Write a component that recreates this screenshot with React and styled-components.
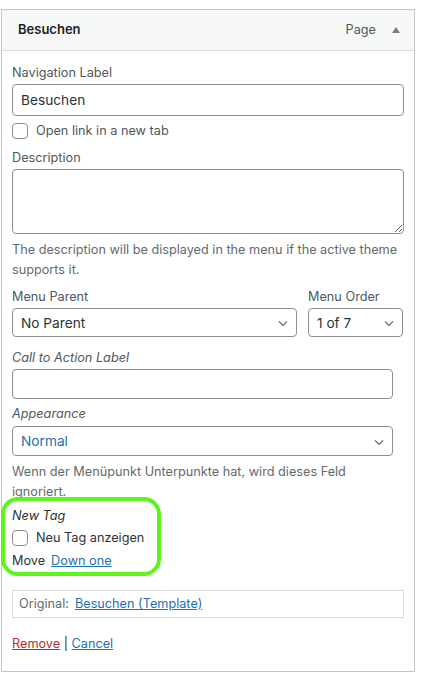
import React from 'react';
import styled, { createGlobalStyle } from 'styled-components';

const GlobalStyle = createGlobalStyle`
    html, body {
        margin: 0;
        padding: 0;
        background: #fff;
    }
    body {
        font-family: Inter, "Liberation Sans", Arial, sans-serif;
        font-size: 12.7px;
        line-height: 1.5;
        color: #2c3338;
    }
    *, *::before, *::after {
        box-sizing: border-box;
    }
`;

const chevron = encodeURIComponent(
    '<svg xmlns="http://www.w3.org/2000/svg" width="20" height="20" viewBox="0 0 20 20"><path d="M5 8l5 5 5-5" fill="none" stroke="#50575e" stroke-width="1.3"/></svg>'
);

const Panel = styled.div`
    margin: 9px 0 0 1px;
    width: 414px;
    border: 1px solid #c3c4c7;
    background: #fff;
`;

const Header = styled.div`
    display: flex;
    align-items: center;
    height: 41px;
    padding: 0 14px 0 16px;
    background: #f6f7f7;
    border-bottom: 1px solid #dcdcde;
`;

const Title = styled.span`
    flex: 1;
    font-size: 13px;
    font-weight: 600;
    color: #1d2327;
`;

const ItemType = styled.span`
    font-size: 12.7px;
    color: #50575e;
    margin-right: 16px;
`;

const Toggle = styled.span`
    width: 0;
    height: 0;
    border-left: 4px solid transparent;
    border-right: 4px solid transparent;
    border-bottom: 6px solid #787c82;
`;

const Body = styled.div`
    padding: 12px 10px 17px 10px;
`;

const Field = styled.div`
    display: flex;
    flex-direction: column;
    margin-top: ${p => p.$gap || 0}px;
    width: ${p => p.$width || '100%'};
`;

const Label = styled.label`
    display: block;
    height: 20px;
    line-height: 20px;
    color: #50575e;
    font-style: ${p => (p.$italic ? 'italic' : 'normal')};
    margin-bottom: ${p => p.$space || 1}px;
`;

const Input = styled.input`
    display: block;
    width: 100%;
    height: ${p => p.$h || 30}px;
    padding: 0 8px;
    border: 1px solid #8c8f94;
    border-radius: 4px;
    font-family: inherit;
    font-size: 13.7px;
    color: #2c3338;
    background: #fff;
    outline: none;
`;

const Textarea = styled.textarea`
    display: block;
    width: 100%;
    height: 65px;
    padding: 4px 8px;
    border: 1px solid #8c8f94;
    border-radius: 4px;
    font-family: inherit;
    font-size: 13.7px;
    outline: none;
    resize: vertical;
`;

const Select = styled.select`
    display: block;
    width: 100%;
    height: ${p => p.$h || 29}px;
    padding: 0 24px 0 8px;
    border: 1px solid #8c8f94;
    border-radius: 4px;
    font-family: inherit;
    font-size: 13.7px;
    color: ${p => (p.$accent ? '#2271b1' : '#2c3338')};
    background: #fff url("data:image/svg+xml,${chevron}") no-repeat right 5px top 55%;
    background-size: 16px 16px;
    appearance: none;
    outline: none;
`;

const CheckRow = styled.label`
    display: flex;
    align-items: center;
    gap: 8px;
    height: 20px;
    margin-top: ${p => p.$gap || 0}px;
    color: ${p => (p.$dark ? '#2c3338' : '#50575e')};
`;

const Checkbox = styled.input.attrs({ type: 'checkbox' })`
    appearance: none;
    margin: 0;
    width: 16px;
    height: 16px;
    border: 1px solid #8c8f94;
    border-radius: 4px;
    background: #fff;
    flex: none;
`;

const Help = styled.p`
    margin: ${p => p.$gap || 6}px 0 0;
    color: #646970;
    line-height: 19.5px;
`;

const Row = styled.div`
    display: flex;
    gap: 11px;
    margin-top: 8px;
`;

const Narrow = styled.div`
    width: 381px;
`;

const TagSection = styled.div`
    position: relative;
    margin-top: 5px;

    &::before {
        content: '';
        position: absolute;
        left: -11px;
        top: -9px;
        width: 160px;
        height: 79px;
        border: 4px solid #5df41c;
        border-radius: 17px;
        pointer-events: none;
    }
`;

const TagTitle = styled.div`
    height: 20px;
    line-height: 20px;
    font-style: italic;
    color: #2c3338;
`;

const MoveRow = styled.div`
    height: 20px;
    line-height: 20px;
    margin-top: 3px;
    color: #2c3338;
`;

const Link = styled.a`
    color: ${p => (p.$danger ? '#b32d2e' : '#2271b1')};
    text-decoration: underline;
    margin-left: ${p => p.$indent || 0}px;
    cursor: pointer;
`;

const Original = styled.div`
    margin-top: 19px;
    height: 28px;
    line-height: 26px;
    padding: 0 6px;
    border: 1px solid #dcdcde;
    color: #646970;
`;

const Actions = styled.div`
    margin-top: 16px;
    height: 20px;
    line-height: 20px;
    color: #2c3338;
`;

export default function App() {
    return (
        <>
            <GlobalStyle />
            <Panel>
                <Header>
                    <Title>Besuchen</Title>
                    <ItemType>Page</ItemType>
                    <Toggle />
                </Header>
                <Body>
                    <Field>
                        <Label>Navigation Label</Label>
                        <Input $h={32} defaultValue="Besuchen" />
                    </Field>
                    <CheckRow $gap={5}>
                        <Checkbox />
                        Open link in a new tab
                    </CheckRow>
                    <Field $gap={7}>
                        <Label>Description</Label>
                        <Textarea />
                    </Field>
                    <Help>The description will be displayed in the menu if the active theme supports it.</Help>
                    <Row>
                        <Field $width="285px">
                            <Label>Menu Parent</Label>
                            <Select defaultValue="none">
                                <option value="none">No Parent</option>
                            </Select>
                        </Field>
                        <Field $width="95px">
                            <Label>Menu Order</Label>
                            <Select defaultValue="1">
                                <option value="1">1 of 7</option>
                            </Select>
                        </Field>
                    </Row>
                    <Narrow>
                        <Field $gap={11}>
                            <Label $italic>Call to Action Label</Label>
                            <Input $h={30} />
                        </Field>
                        <Field $gap={5}>
                            <Label $italic $space={2}>Appearance</Label>
                            <Select $accent $h={30} defaultValue="normal">
                                <option value="normal">Normal</option>
                            </Select>
                        </Field>
                        <Help>Wenn der Menüpunkt Unterpunkte hat, wird dieses Feld ignoriert.</Help>
                    </Narrow>
                    <TagSection>
                        <TagTitle>New Tag</TagTitle>
                        <CheckRow $dark $gap={2}>
                            <Checkbox />
                            Neu Tag anzeigen
                        </CheckRow>
                        <MoveRow>
                            Move<Link $indent={6}>Down one</Link>
                        </MoveRow>
                    </TagSection>
                    <Original>
                        Original:<Link $indent={6}>Besuchen (Template)</Link>
                    </Original>
                    <Actions>
                        <Link $danger>Remove</Link> | <Link>Cancel</Link>
                    </Actions>
                </Body>
            </Panel>
        </>
    );
}
